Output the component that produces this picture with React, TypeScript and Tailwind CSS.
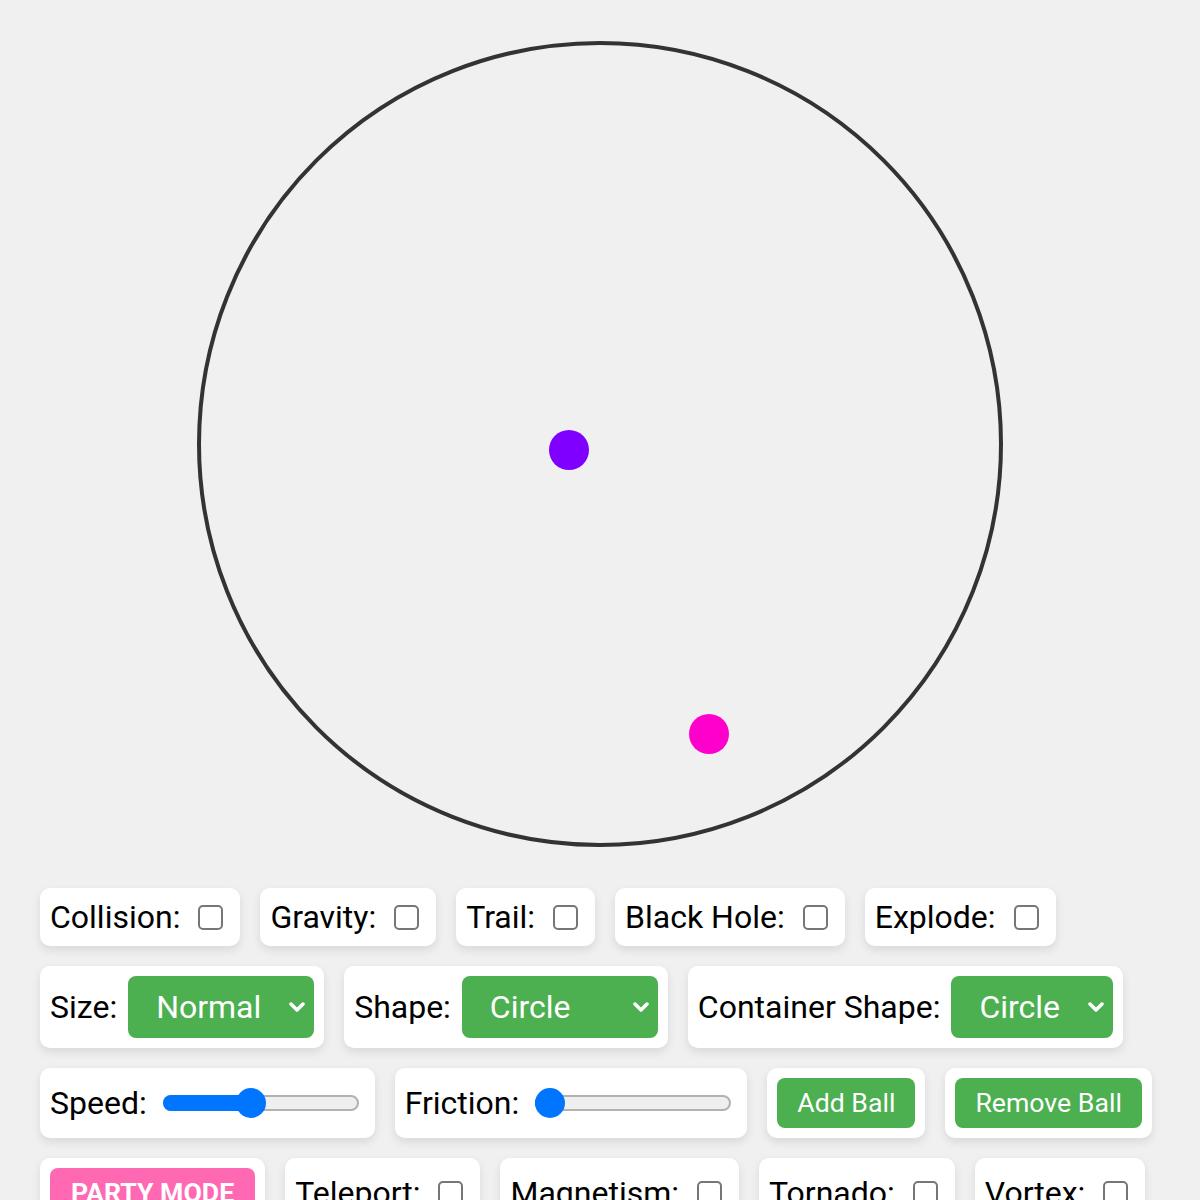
import type { ReactNode } from 'react';

const balls = [
  { left: 348, top: 385, color: '#8000ff' },
  { left: 488, top: 669, color: '#ff00cc' },
];

function Panel({ children }: { children: ReactNode }) {
  return (
    <div className="flex items-center rounded-[10px] bg-white p-[10px] shadow-[0_4px_10px_rgba(0,0,0,0.1)]">
      {children}
    </div>
  );
}

function Toggle({ label }: { label: string }) {
  return (
    <Panel>
      <span className="leading-[38px]">{label}</span>
      <span className="ml-[18px] mr-[7px] h-[25px] w-[25px] rounded-[5px] border-2 border-[#767676] bg-white" />
    </Panel>
  );
}

function Picker({ label, value, width }: { label: string; value: string; width: string }) {
  return (
    <Panel>
      <span className="leading-[38px]">{label}</span>
      <div className={`ml-[11px] flex h-[62px] items-center justify-between rounded-[8px] bg-[#4caf50] pl-[28px] pr-[9px] text-white ${width}`}>
        <span>{value}</span>
        <svg width="16" height="10" viewBox="0 0 16 10" fill="none">
          <path d="M2 2l6 6 6-6" stroke="white" strokeWidth="3.5" strokeLinecap="round" strokeLinejoin="round" />
        </svg>
      </div>
    </Panel>
  );
}

function Slider({ label, pct }: { label: string; pct: number }) {
  // thumb travels between the two track ends, minus its own radius
  const center = 15 + (166 * pct) / 100;
  return (
    <Panel>
      <span className="leading-[38px]">{label}</span>
      <div className="relative ml-[16px] mr-[6px] flex h-[30px] w-[196px] items-center">
        <div className="h-[16px] w-full rounded-full border-2 border-[#b2b2b2] bg-[#efefef]" />
        <div className="absolute left-0 h-[16px] rounded-full bg-[#0075ff]" style={{ width: center }} />
        <div
          className="absolute h-[30px] w-[30px] rounded-full bg-[#0075ff]"
          style={{ left: center - 15 }}
        />
      </div>
    </Panel>
  );
}

function Action({ children, party }: { children: ReactNode; party?: boolean }) {
  return (
    <Panel>
      <button
        className={`h-[50px] rounded-[8px] px-[20px] text-[26.67px] text-white ${
          party ? 'bg-[#ff69b4] px-[21px] font-bold uppercase' : 'bg-[#4caf50]'
        }`}
      >
        {children}
      </button>
    </Panel>
  );
}

export default function App() {
  return (
    <div className="min-h-screen bg-[#f0f0f0] pt-[41px] font-['Roboto',sans-serif] text-[32px] text-black">
      <div className="flex justify-center">
        <div className="relative h-[806px] w-[806px] rounded-full border-4 border-[#333333]">
          {balls.map((b, i) => (
            <div
              key={i}
              className="absolute h-[40px] w-[40px] rounded-full"
              style={{ left: b.left, top: b.top, backgroundColor: b.color }}
            />
          ))}
        </div>
      </div>

      <div className="mt-[41px] flex flex-wrap gap-[20px] px-[40px] pb-[40px]">
        <Toggle label="Collision:" />
        <Toggle label="Gravity:" />
        <Toggle label="Trail:" />
        <Toggle label="Black Hole:" />
        <Toggle label="Explode:" />

        <Picker label="Size:" value="Normal" width="w-[186px]" />
        <Picker label="Shape:" value="Circle" width="w-[196px]" />
        <Picker label="Container Shape:" value="Circle" width="w-[162px]" />

        <Slider label="Speed:" pct={44.4} />
        <Slider label="Friction:" pct={0} />
        <Action>Add Ball</Action>
        <Action>Remove Ball</Action>

        <Action party>Party Mode</Action>
        <Toggle label="Teleport:" />
        <Toggle label="Magnetism:" />
        <Toggle label="Tornado:" />
        <Toggle label="Vortex:" />
      </div>
    </div>
  );
}
